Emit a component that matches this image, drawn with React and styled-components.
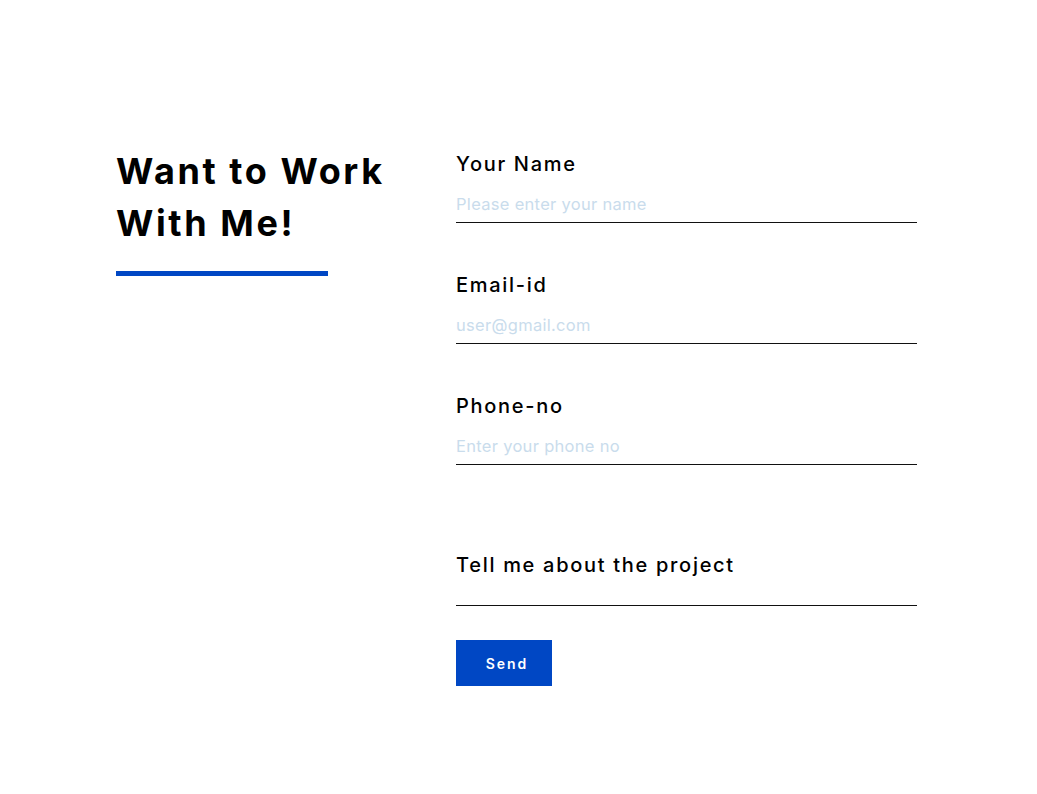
import React from 'react';
import styled, { createGlobalStyle } from 'styled-components';

const GlobalStyle = createGlobalStyle`
  body {
    margin: 0;
    background: #fff;
    font-family: Inter, "Open Sans", sans-serif;
  }
`;

const Page = styled.div`
  display: flex;
  padding: 145px 0 0 116px;
  box-sizing: border-box;
  min-height: 794px;
`;

const Intro = styled.div`
  width: 340px;
`;

const Heading = styled.h1`
  margin: 0;
  font-size: 36px;
  line-height: 52px;
  font-weight: 700;
  letter-spacing: 2.6px;
  color: #000;
`;

const Bar = styled.div`
  width: 212px;
  height: 5px;
  margin-top: 22px;
  background: #0047c4;
`;

const Form = styled.form`
  width: 461px;
  padding-top: 5px;
  display: flex;
  flex-direction: column;
`;

const Field = styled.label`
  display: flex;
  flex-direction: column;
  margin-top: ${p => p.$gap}px;
`;

const Label = styled.span`
  font-size: 20px;
  line-height: 28px;
  font-weight: 500;
  letter-spacing: 1.7px;
  color: #000;
`;

const Input = styled.input`
  margin-top: 8px;
  height: 36px;
  padding: 0;
  border: none;
  border-bottom: 1.5px solid #111;
  outline: none;
  font-family: inherit;
  font-size: 16.5px;
  letter-spacing: 0.3px;
  background: transparent;

  &::placeholder {
    color: #c9dcec;
  }
`;

const Message = styled.textarea`
  height: 26px;
  padding: 0;
  border: none;
  border-bottom: 1.5px solid #111;
  outline: none;
  resize: none;
  font-family: inherit;
  font-size: 16px;
  background: transparent;
`;

const SendButton = styled.button`
  align-self: flex-start;
  margin-top: 34px;
  width: 96px;
  height: 46px;
  padding: 0 0 0 6px;
  border: none;
  background: #0047c4;
  color: #fff;
  font-family: inherit;
  font-size: 14px;
  font-weight: 600;
  letter-spacing: 2px;
  cursor: pointer;
`;

const fields = [
  { label: 'Your Name', placeholder: 'Please enter your name', gap: 0 },
  { label: 'Email-id', placeholder: 'user@gmail.com', gap: 48 },
  { label: 'Phone-no', placeholder: 'Enter your phone no', gap: 48 },
];

export default function App() {
  return (
    <>
      <GlobalStyle />
      <Page>
        <Intro>
          <Heading>
            Want to Work
            <br />
            With Me!
          </Heading>
          <Bar />
        </Intro>
        <Form onSubmit={e => e.preventDefault()}>
          {fields.map(f => (
            <Field key={f.label} $gap={f.gap}>
              <Label>{f.label}</Label>
              <Input placeholder={f.placeholder} />
            </Field>
          ))}
          <Field $gap={86}>
            <Label>Tell me about the project</Label>
            <Message />
          </Field>
          <SendButton type="submit">Send</SendButton>
        </Form>
      </Page>
    </>
  );
}
